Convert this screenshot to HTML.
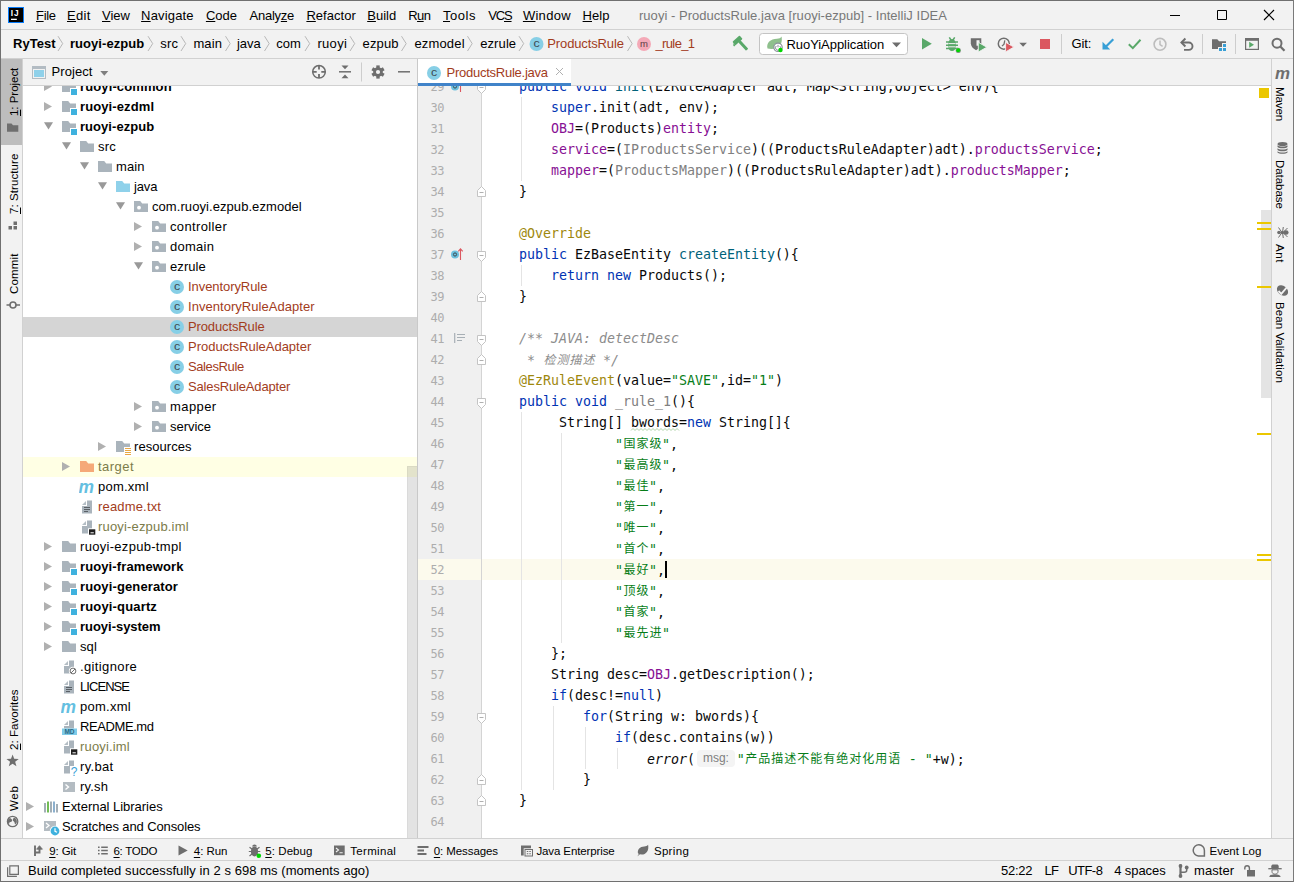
<!DOCTYPE html><html><head><meta charset="utf-8"><title>ruoyi - ProductsRule.java [ruoyi-ezpub] - IntelliJ IDEA</title><style>
*{box-sizing:border-box}
html,body{margin:0;padding:0}
body{width:1294px;height:882px;position:relative;overflow:hidden;background:#f2f2f2;
 font-family:"Liberation Sans","Noto Sans CJK SC",sans-serif;font-size:13px;color:#000;}
.abs{position:absolute}
.t{position:absolute;white-space:pre;line-height:20px;height:20px;font-size:13px}
u{text-decoration:underline;text-underline-offset:2px;text-decoration-thickness:1px}
.b{font-weight:bold}
.code{position:absolute;left:487px;white-space:pre;font-family:"DejaVu Sans Mono","Liberation Mono","Noto Sans CJK SC",monospace;font-size:13.29px;line-height:21px;height:21px;color:#080808}
.ln{position:absolute;left:418px;width:26.2px;text-align:right;font-family:"DejaVu Sans Mono","Liberation Mono",monospace;font-size:12px;letter-spacing:-0.4px;line-height:21px;height:21px;color:#adadad}
.k{color:#0033b3}.f{color:#871094}.g{color:#808080}.a{color:#9e880d}.s{color:#067d17}.c{color:#8c8c8c;font-style:italic}.m{color:#00627a}.i{font-style:italic}
.z{font-family:"Noto Sans CJK SC",sans-serif;font-size:12px;letter-spacing:1px;position:relative;top:-1px;left:0.5px}
.wv{text-decoration:underline wavy #b5b86a;text-decoration-thickness:1px;text-underline-offset:2px}
.hint{display:inline-block;font-family:"Liberation Sans",sans-serif;font-size:12px;color:#7f7f7f;background:#f4f4f4;border-radius:4px;height:17px;line-height:17px;width:38px;text-align:center;padding:0;margin:0 1.75px 0 2px;vertical-align:2px;letter-spacing:0}
.vt{position:absolute;white-space:pre;font-size:11.5px;line-height:14px;height:14px;transform-origin:0 0}
</style></head><body>
<div class="abs" style="left:0;top:0;width:1294px;height:30px;background:#f2f2f2;border-bottom:1px solid #d1d1d1"></div>
<svg class="abs" style="left:8px;top:7px" width="16" height="16" viewBox="0 0 16 16"><rect width="16" height="16" fill="#087cfa"/><rect x="1" y="1" width="14" height="14" fill="#000"/><text x="2.700" y="9.300" font-family="Liberation Sans,sans-serif" font-weight="bold" font-size="8.300" letter-spacing="0.900" fill="#fff">IJ</text><rect x="3" y="11.700" width="5.800" height="1.300" fill="#fff"/></svg>
<span class="t" style="letter-spacing:-0.32px;left:36px;top:6px;"><u style="text-underline-offset:1px">F</u>ile</span>
<span class="t" style="letter-spacing:0.30px;left:67px;top:6px;"><u style="text-underline-offset:1px">E</u>dit</span>
<span class="t" style="letter-spacing:0.00px;left:102px;top:6px;"><u style="text-underline-offset:1px">V</u>iew</span>
<span class="t" style="letter-spacing:0.16px;left:141.1px;top:6px;"><u style="text-underline-offset:1px">N</u>avigate</span>
<span class="t" style="letter-spacing:0.02px;left:205.9px;top:6px;"><u style="text-underline-offset:1px">C</u>ode</span>
<span class="t" style="letter-spacing:-0.26px;left:249.6px;top:6px;">Analy<u style="text-underline-offset:1px">z</u>e</span>
<span class="t" style="letter-spacing:0.03px;left:306.4px;top:6px;"><u style="text-underline-offset:1px">R</u>efactor</span>
<span class="t" style="letter-spacing:0.02px;left:367.2px;top:6px;"><u style="text-underline-offset:1px">B</u>uild</span>
<span class="t" style="letter-spacing:-0.63px;left:408.3px;top:6px;">R<u style="text-underline-offset:1px">u</u>n</span>
<span class="t" style="letter-spacing:0.52px;left:443px;top:6px;"><u style="text-underline-offset:1px">T</u>ools</span>
<span class="t" style="letter-spacing:-1.13px;left:488.2px;top:6px;">VC<u style="text-underline-offset:1px">S</u></span>
<span class="t" style="letter-spacing:0.28px;left:522.9px;top:6px;"><u style="text-underline-offset:1px">W</u>indow</span>
<span class="t" style="letter-spacing:0.03px;left:582.6px;top:6px;"><u style="text-underline-offset:1px">H</u>elp</span>
<span class="t" style="letter-spacing:0.03px;left:639px;top:6px;color:#787878">ruoyi - ProductsRule.java [ruoyi-ezpub] - IntelliJ IDEA</span>
<svg class="abs" style="left:1150px;top:0" width="144" height="30" viewBox="0 0 144 30"><path d="M20 15.500h10M67.500 10.500h9v9h-9z" stroke="#000" stroke-width="1" fill="none"/><path d="M114 10l10 10M124 10l-10 10" stroke="#000" stroke-width="1.200" fill="none"/></svg>
<div class="abs" style="left:0;top:30px;width:1294px;height:29px;background:#f2f2f2;border-bottom:1px solid #d1d1d1"></div>
<span class="t" style="letter-spacing:0.03px;left:13px;top:34px;font-weight:bold;">RyTest</span>
<span class="t" style="letter-spacing:0.05px;left:70px;top:34px;font-weight:bold;">ruoyi-ezpub</span>
<span class="t" style="letter-spacing:0.20px;left:160.2px;top:34px;">src</span>
<span class="t" style="letter-spacing:0.15px;left:193.4px;top:34px;">main</span>
<span class="t" style="letter-spacing:-0.08px;left:237px;top:34px;">java</span>
<span class="t" style="letter-spacing:0.07px;left:276.2px;top:34px;">com</span>
<span class="t" style="letter-spacing:0.32px;left:317.4px;top:34px;">ruoyi</span>
<span class="t" style="letter-spacing:0.14px;left:362.6px;top:34px;">ezpub</span>
<span class="t" style="letter-spacing:0.17px;left:414.4px;top:34px;">ezmodel</span>
<span class="t" style="letter-spacing:0.10px;left:480.2px;top:34px;">ezrule</span>
<span class="t" style="letter-spacing:-0.13px;left:547.3px;top:34px;color:#a23c1c;">ProductsRule</span>
<span class="t" style="letter-spacing:-0.61px;left:655.4px;top:34px;color:#a23c1c;">_rule_1</span>
<svg class="abs" style="left:0;top:30px" width="1294" height="29" viewBox="0 0 1294 29"><path d="M58 6.2l4.7 7.4l-4.7 7.4" stroke="#b8b8b8" stroke-width="1" fill="none"/><path d="M148 6.2l4.7 7.4l-4.7 7.4" stroke="#b8b8b8" stroke-width="1" fill="none"/><path d="M181 6.2l4.7 7.4l-4.7 7.4" stroke="#b8b8b8" stroke-width="1" fill="none"/><path d="M225.5 6.2l4.7 7.4l-4.7 7.4" stroke="#b8b8b8" stroke-width="1" fill="none"/><path d="M264.5 6.2l4.7 7.4l-4.7 7.4" stroke="#b8b8b8" stroke-width="1" fill="none"/><path d="M305 6.2l4.7 7.4l-4.7 7.4" stroke="#b8b8b8" stroke-width="1" fill="none"/><path d="M350 6.2l4.7 7.4l-4.7 7.4" stroke="#b8b8b8" stroke-width="1" fill="none"/><path d="M401.5 6.2l4.7 7.4l-4.7 7.4" stroke="#b8b8b8" stroke-width="1" fill="none"/><path d="M467.5 6.2l4.7 7.4l-4.7 7.4" stroke="#b8b8b8" stroke-width="1" fill="none"/><path d="M519 6.2l4.7 7.4l-4.7 7.4" stroke="#b8b8b8" stroke-width="1" fill="none"/><path d="M627.5 6.2l4.7 7.4l-4.7 7.4" stroke="#b8b8b8" stroke-width="1" fill="none"/><circle cx="536.5" cy="14" r="7" fill="#87cfe6"/><text x="536.5" y="17.2" text-anchor="middle" font-family="Liberation Sans,sans-serif" font-size="10" fill="#3c4a52" textLength="6.200" lengthAdjust="spacingAndGlyphs">c</text><circle cx="644" cy="14" r="7" fill="#f4a9b7"/><text x="644" y="17" text-anchor="middle" font-family="Liberation Sans,sans-serif" font-size="9.5" fill="#5c3a42">m</text></svg>
<svg class="abs" style="left:720px;top:30px" width="574" height="29" viewBox="720 30 574 29">
<!-- hammer -->
<g fill="#59a869" transform="rotate(-42 740 42)"><rect x="734.500" y="36.800" width="9.500" height="4.600" rx=".8"/><path d="M734.500 38.500l-1.800 1.500v1.400h1.800z"/><rect x="738.600" y="41" width="3" height="11.500" rx=".6"/></g>
<!-- run config box -->
<rect x="759.5" y="33.5" width="148" height="21" rx="3" ry="3" fill="#fff" stroke="#c4c4c4"/>
<!-- spring-boot icon -->
<path d="M767.5 48.5c-1.5-5.5 3-9.500 9.500-9.700 2.200-.1 3.600-.9 4.600-2.300.5 3.300.3 6.200-1.300 8.500-2.600 3.600-7.800 4.600-12.800 3.500z" fill="#8fc08d"/>
<circle cx="778" cy="47.300" r="4.200" fill="#fff" stroke="#8a9299" stroke-width="1.200"/>
<path d="M778 44.800v2.500M776.200 46a2.500 2.500 0 1 0 3.600 0" stroke="#8a9299" stroke-width="1" fill="none"/>
<circle cx="780.500" cy="50" r="2.200" fill="#00d600"/>
<path d="M892 42.500h9l-4.500 4.700z" fill="#6e6e6e"/>
<!-- run -->
<path d="M922 38l9.800 5.800-9.800 5.800z" fill="#59a869"/>
<!-- debug -->
<path d="M946 42h12M946 45.200h12M946 48.400h12M949.300 37.300l1.700 2.700M954.700 37.300l-1.700 2.700" stroke="#59a869" stroke-width="1.500" fill="none"/>
<path d="M948.200 44.500c0-3.500 1.600-5.500 3.800-5.500s3.800 2 3.800 5.500v1.500c0 3-1.600 5-3.800 5s-3.800-2-3.800-5z" fill="#59a869"/>
<path d="M948.500 43.600h7M948.500 46.800h7" stroke="#f2f2f2" stroke-width="1"/>
<circle cx="958.300" cy="50.400" r="2.600" fill="#8f9a92"/><circle cx="958.200" cy="50.200" r="2" fill="#00d600"/>
<!-- coverage -->
<path d="M970.800 38.300h10.500v5c0 3-2 5.300-5.250 7-3.250-1.700-5.250-4-5.250-7z" fill="#6e6e6e"/>
<path d="M976.500 40.200h3v5.500h-3z" fill="#f2f2f2"/>
<path d="M978.300 42.300l8.500 4.900-8.500 4.900z" fill="#59a869" stroke="#f2f2f2" stroke-width=".9"/>
<!-- profiler -->
<circle cx="1003.800" cy="43.700" r="5.500" fill="none" stroke="#6e6e6e" stroke-width="1.500"/>
<path d="M1004.800 40.300l-.8 3.800-2 2" stroke="#6e6e6e" stroke-width="1.300" fill="none"/>
<path d="M1005.600 42.300l8.300 4.800-8.300 4.800z" fill="#db5860" stroke="#f2f2f2" stroke-width=".9"/>
<path d="M1019.300 42.800h7.600l-3.800 4z" fill="#6e6e6e"/>
<!-- stop -->
<rect x="1040" y="39" width="10" height="10" fill="#db5860"/>
<path d="M1061.500 34v20M1202.500 34v20M1235.500 34v20" stroke="#cdcdcd" stroke-width="1"/>
<!-- git update -->
<path d="M1113.300 39.200l-8 8" stroke="#389fd6" stroke-width="2.200" fill="none"/><path d="M1102.500 41.800v7.700h7.700z" fill="#389fd6"/>
<!-- commit -->
<path d="M1128.800 44.300l4 3.800 7.700-8.300" stroke="#59a869" stroke-width="2" fill="none"/>
<!-- history -->
<circle cx="1160" cy="44.300" r="5.900" fill="none" stroke="#bdbdbd" stroke-width="1.600"/>
<path d="M1160 40.600v4l2.600 1.700" stroke="#bdbdbd" stroke-width="1.500" fill="none"/>
<!-- rollback -->
<path d="M1181.500 42.500h7.300a3.700 3.700 0 0 1 0 7.400h-4.800" stroke="#6e6e6e" stroke-width="1.900" fill="none"/>
<path d="M1185.400 38.500l-4 4 4 4" stroke="#6e6e6e" stroke-width="1.900" fill="none"/>
<!-- project structure -->
<path d="M1212 39.300h5.300l1.800 2h6.900v7.700h-14z" fill="#6e6e6e"/><path d="M1218 47h9v5h-9zM1222 43h5v5h-5z" fill="#f2f2f2"/><path d="M1219 48h3v3h-3zM1223 48h3v3h-3zM1223 44h3v3h-3z" fill="#389fd6"/>
<!-- run anything -->
<path d="M1245 38h14v12h-14z" fill="#6e6e6e"/><path d="M1246.200 40.800h11.600v8h-11.600z" fill="#f2f2f2"/>
<path d="M1249.200 41.700l4.800 3-4.800 3z" fill="#59a869"/>
<!-- search -->
<circle cx="1277" cy="43.200" r="4.500" fill="none" stroke="#6e6e6e" stroke-width="2"/>
<path d="M1280.300 46.500l4.200 4.200" stroke="#6e6e6e" stroke-width="2.300"/>
</svg>

<span class="t" style="letter-spacing:-0.06px;left:786.5px;top:35px;">RuoYiApplication</span>
<span class="t" style="letter-spacing:-0.12px;left:1071.5px;top:34px;">Git:</span>
<div class="abs" style="left:0;top:59px;width:23px;height:779px;background:#f2f2f2;border-right:1px solid #d1d1d1"></div>
<div class="abs" style="left:1px;top:59px;width:21px;height:86px;background:#bdbdbd"></div>
<span class="vt" style="letter-spacing:-0.03px;left:7px;top:116px;transform:rotate(-90deg)"><u>1</u>: Project</span>
<span class="vt" style="letter-spacing:0.08px;left:7px;top:213.8px;transform:rotate(-90deg)"><u>7</u>: Structure</span>
<span class="vt" style="letter-spacing:0.17px;left:7px;top:294px;transform:rotate(-90deg)">Commit</span>
<span class="vt" style="letter-spacing:0.04px;left:7px;top:749.8px;transform:rotate(-90deg)"><u>2</u>: Favorites</span>
<span class="vt" style="letter-spacing:0.67px;left:7px;top:811px;transform:rotate(-90deg)">Web</span>
<svg class="abs" style="left:0;top:59px" width="23" height="779" viewBox="0 59 23 779">
<path d="M7 123.500h4.500l1.500 1.700h5.300v6.600H7z" fill="#6e6e6e"/>
<path d="M8.500 226h3.500v3.500h-3.500zM13.500 226h3.500v3.500h-3.500zM13.500 221.500h3.500v3.500h-3.500z" fill="#6e6e6e"/>
<circle cx="13" cy="305" r="3" fill="none" stroke="#6e6e6e" stroke-width="1.600"/><path d="M6.500 305h3.500M16 305h4" stroke="#6e6e6e" stroke-width="1.600"/>
<polygon points="12.60,754.50 14.19,758.82 18.78,758.99 15.17,761.83 16.42,766.26 12.60,763.70 8.78,766.26 10.03,761.83 6.42,758.99 11.01,758.82" fill="#6e6e6e"/>
<circle cx="12.600" cy="821.500" r="5.200" fill="#f2f2f2" stroke="#6e6e6e" stroke-width="1.300"/><path d="M9 818.500c1.500-.5 2.500.2 3 1.300s-.2 2-1.400 2.200-1.800 1-1.400 2.400l-1.200-1.200c-.8-1.500-.5-3.300 1-4.700zM14.200 817.500l1.800 1.300c.9 1.200 1.100 2.600.7 4l-1.500 1.800c-.6-.8-.3-1.700-.9-2.600s-1.500-.9-1.500-2 .6-1.700 1.400-2.500z" fill="#6e6e6e"/>
</svg>
<div class="abs" style="left:23px;top:59px;width:394px;height:27px;background:#f2f2f2;border-bottom:1px solid #d1d1d1"></div>
<div class="abs" style="left:23px;top:86px;width:394px;height:752px;background:#fff"></div>
<span class="t" style="letter-spacing:0.07px;left:51.5px;top:62px;">Project</span>
<svg class="abs" style="left:23px;top:59px" width="394" height="27" viewBox="23 59 394 27">
<rect x="32.500" y="66.500" width="13" height="12" fill="#f2f2f2" stroke="#b3bcc3"/><rect x="32" y="66" width="14" height="3" fill="#b3bcc3"/><rect x="34" y="70" width="10" height="7" fill="#8fd1ea"/>
<path d="M100.300 71h8l-4 4.800z" fill="#7f7f7f"/>
<circle cx="319" cy="71.800" r="6.300" fill="none" stroke="#6e6e6e" stroke-width="1.500"/><path d="M319 65.500v4M319 74.100v4M312.700 71.800h4M321.300 71.800h4" stroke="#6e6e6e" stroke-width="1.800"/>
<path d="M339 71.800h12" stroke="#6e6e6e" stroke-width="1.500"/><path d="M341.500 65.500h7l-3.500 3.700zM341.500 78.200h7l-3.500-3.700z" fill="#6e6e6e"/>
<path d="M361.500 62.500v19" stroke="#cdcdcd"/>
<rect x="376.30" y="65.40" width="3.400" height="13.200" transform="rotate(0 378 72)" fill="#6e6e6e"/><rect x="376.30" y="65.40" width="3.400" height="13.200" transform="rotate(60 378 72)" fill="#6e6e6e"/><rect x="376.30" y="65.40" width="3.400" height="13.200" transform="rotate(120 378 72)" fill="#6e6e6e"/>
<circle cx="378" cy="72" r="4.800" fill="#6e6e6e"/><circle cx="378" cy="72" r="2.100" fill="#f2f2f2"/>
<path d="M398 71.800h12" stroke="#6e6e6e" stroke-width="1.500"/>
</svg>
<div class="abs" style="left:23px;top:86px;width:394px;height:752px;overflow:hidden"><div class="abs" style="left:-23px;top:-86px;width:420px;height:900px">
<span class="t" style="letter-spacing:0.12px;left:80px;top:77px;color:#000;font-weight:bold;">ruoyi-common</span>
<svg class="abs" style="left:61px;top:79px" width="18" height="18" viewBox="0 0 18 18"><path d="M1 2h6.2l2 2.5H15V13H1z" fill="#aab4bc"/><rect x="9" y="9" width="8" height="8" fill="#fff"/><rect x="10" y="10" width="6" height="6" fill="#3eb1de"/></svg>
<svg class="abs" style="left:44px;top:81px" width="12" height="12" viewBox="0 0 12 12"><path d="M0 1l8 4.5l-8 4.5z" fill="#b0b0b0"/></svg>
<span class="t" style="letter-spacing:0.11px;left:80px;top:97px;color:#000;font-weight:bold;">ruoyi-ezdml</span>
<svg class="abs" style="left:61px;top:99px" width="18" height="18" viewBox="0 0 18 18"><path d="M1 2h6.2l2 2.5H15V13H1z" fill="#aab4bc"/><rect x="9" y="9" width="8" height="8" fill="#fff"/><rect x="10" y="10" width="6" height="6" fill="#3eb1de"/></svg>
<svg class="abs" style="left:44px;top:101px" width="12" height="12" viewBox="0 0 12 12"><path d="M0 1l8 4.5l-8 4.5z" fill="#b0b0b0"/></svg>
<span class="t" style="letter-spacing:0.05px;left:80px;top:117px;color:#000;font-weight:bold;">ruoyi-ezpub</span>
<svg class="abs" style="left:61px;top:119px" width="18" height="18" viewBox="0 0 18 18"><path d="M1 2h6.2l2 2.5H15V13H1z" fill="#aab4bc"/><rect x="9" y="9" width="8" height="8" fill="#fff"/><rect x="10" y="10" width="6" height="6" fill="#3eb1de"/></svg>
<svg class="abs" style="left:44px;top:121px" width="12" height="12" viewBox="0 0 12 12"><path d="M0 1.2h9l-4.5 7.3z" fill="#999"/></svg>
<span class="t" style="letter-spacing:0.20px;left:98px;top:137px;color:#000;">src</span>
<svg class="abs" style="left:79px;top:139px" width="18" height="18" viewBox="0 0 18 18"><path d="M1 2h6.2l2 2.5H15V13H1z" fill="#aab4bc"/></svg>
<svg class="abs" style="left:62px;top:141px" width="12" height="12" viewBox="0 0 12 12"><path d="M0 1.2h9l-4.5 7.3z" fill="#999"/></svg>
<span class="t" style="letter-spacing:0.12px;left:116px;top:157px;color:#000;">main</span>
<svg class="abs" style="left:97px;top:159px" width="18" height="18" viewBox="0 0 18 18"><path d="M1 2h6.2l2 2.5H15V13H1z" fill="#aab4bc"/></svg>
<svg class="abs" style="left:80px;top:161px" width="12" height="12" viewBox="0 0 12 12"><path d="M0 1.2h9l-4.5 7.3z" fill="#999"/></svg>
<span class="t" style="letter-spacing:-0.15px;left:134px;top:177px;color:#000;">java</span>
<svg class="abs" style="left:115px;top:179px" width="18" height="18" viewBox="0 0 18 18"><path d="M1 2h6.2l2 2.5H15V13H1z" fill="#8fd1ea"/></svg>
<svg class="abs" style="left:98px;top:181px" width="12" height="12" viewBox="0 0 12 12"><path d="M0 1.2h9l-4.5 7.3z" fill="#999"/></svg>
<span class="t" style="letter-spacing:0.07px;left:152px;top:197px;color:#000;">com.ruoyi.ezpub.ezmodel</span>
<svg class="abs" style="left:133px;top:199px" width="18" height="18" viewBox="0 0 18 18"><path d="M1 2h6.2l2 2.5H15V13H1z" fill="#aab4bc"/><circle cx="6" cy="8.7" r="1.9" fill="#fff"/></svg>
<svg class="abs" style="left:116px;top:201px" width="12" height="12" viewBox="0 0 12 12"><path d="M0 1.2h9l-4.5 7.3z" fill="#999"/></svg>
<span class="t" style="letter-spacing:0.36px;left:170px;top:217px;color:#000;">controller</span>
<svg class="abs" style="left:151px;top:219px" width="18" height="18" viewBox="0 0 18 18"><path d="M1 2h6.2l2 2.5H15V13H1z" fill="#aab4bc"/><circle cx="6" cy="8.7" r="1.9" fill="#fff"/></svg>
<svg class="abs" style="left:134px;top:221px" width="12" height="12" viewBox="0 0 12 12"><path d="M0 1l8 4.5l-8 4.5z" fill="#b0b0b0"/></svg>
<span class="t" style="letter-spacing:0.27px;left:170px;top:237px;color:#000;">domain</span>
<svg class="abs" style="left:151px;top:239px" width="18" height="18" viewBox="0 0 18 18"><path d="M1 2h6.2l2 2.5H15V13H1z" fill="#aab4bc"/><circle cx="6" cy="8.7" r="1.9" fill="#fff"/></svg>
<svg class="abs" style="left:134px;top:241px" width="12" height="12" viewBox="0 0 12 12"><path d="M0 1l8 4.5l-8 4.5z" fill="#b0b0b0"/></svg>
<span class="t" style="letter-spacing:0.08px;left:170px;top:257px;color:#000;">ezrule</span>
<svg class="abs" style="left:151px;top:259px" width="18" height="18" viewBox="0 0 18 18"><path d="M1 2h6.2l2 2.5H15V13H1z" fill="#aab4bc"/><circle cx="6" cy="8.7" r="1.9" fill="#fff"/></svg>
<svg class="abs" style="left:134px;top:261px" width="12" height="12" viewBox="0 0 12 12"><path d="M0 1.2h9l-4.5 7.3z" fill="#999"/></svg>
<span class="t" style="letter-spacing:-0.07px;left:188px;top:277px;color:#a23c1c;">InventoryRule</span>
<svg class="abs" style="left:169px;top:279px" width="18" height="18" viewBox="0 0 18 18"><circle cx="8" cy="8" r="7" fill="#87cfe6"/><text x="8" y="11.2" text-anchor="middle" font-family="Liberation Sans,sans-serif" font-size="10" fill="#3c4a52" textLength="6.200" lengthAdjust="spacingAndGlyphs">c</text></svg>
<span class="t" style="letter-spacing:0.04px;left:188px;top:297px;color:#a23c1c;">InventoryRuleAdapter</span>
<svg class="abs" style="left:169px;top:299px" width="18" height="18" viewBox="0 0 18 18"><circle cx="8" cy="8" r="7" fill="#87cfe6"/><text x="8" y="11.2" text-anchor="middle" font-family="Liberation Sans,sans-serif" font-size="10" fill="#3c4a52" textLength="6.200" lengthAdjust="spacingAndGlyphs">c</text></svg>
<div class="abs" style="left:23px;width:394px;height:20px;top:317px;background:#d5d5d5;"></div>
<span class="t" style="letter-spacing:-0.12px;left:188px;top:317px;color:#a23c1c;">ProductsRule</span>
<svg class="abs" style="left:169px;top:319px" width="18" height="18" viewBox="0 0 18 18"><circle cx="8" cy="8" r="7" fill="#87cfe6"/><text x="8" y="11.2" text-anchor="middle" font-family="Liberation Sans,sans-serif" font-size="10" fill="#3c4a52" textLength="6.200" lengthAdjust="spacingAndGlyphs">c</text></svg>
<span class="t" style="letter-spacing:-0.02px;left:188px;top:337px;color:#a23c1c;">ProductsRuleAdapter</span>
<svg class="abs" style="left:169px;top:339px" width="18" height="18" viewBox="0 0 18 18"><circle cx="8" cy="8" r="7" fill="#87cfe6"/><text x="8" y="11.2" text-anchor="middle" font-family="Liberation Sans,sans-serif" font-size="10" fill="#3c4a52" textLength="6.200" lengthAdjust="spacingAndGlyphs">c</text></svg>
<span class="t" style="letter-spacing:-0.39px;left:188px;top:357px;color:#a23c1c;">SalesRule</span>
<svg class="abs" style="left:169px;top:359px" width="18" height="18" viewBox="0 0 18 18"><circle cx="8" cy="8" r="7" fill="#87cfe6"/><text x="8" y="11.2" text-anchor="middle" font-family="Liberation Sans,sans-serif" font-size="10" fill="#3c4a52" textLength="6.200" lengthAdjust="spacingAndGlyphs">c</text></svg>
<span class="t" style="letter-spacing:-0.16px;left:188px;top:377px;color:#a23c1c;">SalesRuleAdapter</span>
<svg class="abs" style="left:169px;top:379px" width="18" height="18" viewBox="0 0 18 18"><circle cx="8" cy="8" r="7" fill="#87cfe6"/><text x="8" y="11.2" text-anchor="middle" font-family="Liberation Sans,sans-serif" font-size="10" fill="#3c4a52" textLength="6.200" lengthAdjust="spacingAndGlyphs">c</text></svg>
<span class="t" style="letter-spacing:0.42px;left:170px;top:397px;color:#000;">mapper</span>
<svg class="abs" style="left:151px;top:399px" width="18" height="18" viewBox="0 0 18 18"><path d="M1 2h6.2l2 2.5H15V13H1z" fill="#aab4bc"/><circle cx="6" cy="8.7" r="1.9" fill="#fff"/></svg>
<svg class="abs" style="left:134px;top:401px" width="12" height="12" viewBox="0 0 12 12"><path d="M0 1l8 4.5l-8 4.5z" fill="#b0b0b0"/></svg>
<span class="t" style="letter-spacing:-0.04px;left:170px;top:417px;color:#000;">service</span>
<svg class="abs" style="left:151px;top:419px" width="18" height="18" viewBox="0 0 18 18"><path d="M1 2h6.2l2 2.5H15V13H1z" fill="#aab4bc"/><circle cx="6" cy="8.7" r="1.9" fill="#fff"/></svg>
<svg class="abs" style="left:134px;top:421px" width="12" height="12" viewBox="0 0 12 12"><path d="M0 1l8 4.5l-8 4.5z" fill="#b0b0b0"/></svg>
<span class="t" style="letter-spacing:0.06px;left:134px;top:437px;color:#000;">resources</span>
<svg class="abs" style="left:115px;top:439px" width="18" height="18" viewBox="0 0 18 18"><path d="M1 2h6.2l2 2.5H15V13H1z" fill="#aab4bc"/><rect x="9" y="8" width="8" height="10" fill="#fff"/><path d="M10 9.500h6M10 11.500h6M10 13.500h6M10 15.500h6" stroke="#e9a843" stroke-width="1"/></svg>
<svg class="abs" style="left:98px;top:441px" width="12" height="12" viewBox="0 0 12 12"><path d="M0 1l8 4.5l-8 4.5z" fill="#b0b0b0"/></svg>
<div class="abs" style="left:23px;width:394px;height:20px;top:457px;background:#ffffe4;"></div>
<span class="t" style="letter-spacing:0.47px;left:98px;top:457px;color:#7c7c4a;">target</span>
<svg class="abs" style="left:79px;top:459px" width="18" height="18" viewBox="0 0 18 18"><path d="M1 2h6.2l2 2.5H15V13H1z" fill="#f5a978"/></svg>
<svg class="abs" style="left:62px;top:461px" width="12" height="12" viewBox="0 0 12 12"><path d="M0 1l8 4.5l-8 4.5z" fill="#b0b0b0"/></svg>
<span class="t" style="letter-spacing:0.24px;left:98px;top:477px;color:#000;">pom.xml</span>
<svg class="abs" style="left:79px;top:479px" width="18" height="18" viewBox="0 0 18 18"><text x="-0.5" y="13.6" font-family="Liberation Sans,sans-serif" font-style="italic" font-weight="bold" font-size="19" fill="#64bfe1" textLength="15.500" lengthAdjust="spacingAndGlyphs">m</text></svg>
<span class="t" style="letter-spacing:0.17px;left:98px;top:497px;color:#a23c1c;">readme.txt</span>
<svg class="abs" style="left:79px;top:499px" width="18" height="18" viewBox="0 0 18 18"><path d="M8 1.500H13v13H3V7h5z" fill="#aab4bc"/><path d="M3 6l4-4v4z" fill="#b4bdc4"/><path d="M5 8.5h6M5 10.5h6M5 12.5h4" stroke="#5a6066" stroke-width="1"/></svg>
<span class="t" style="letter-spacing:0.17px;left:98px;top:517px;color:#7c7c4a;">ruoyi-ezpub.iml</span>
<svg class="abs" style="left:79px;top:519px" width="18" height="18" viewBox="0 0 18 18"><path d="M8 1.500H13v13H3V7h5z" fill="#aab4bc"/><path d="M3 6l4-4v4z" fill="#b4bdc4"/><rect x="9" y="9.300" width="8" height="7.400" fill="#fff"/><rect x="10" y="10.300" width="6.300" height="5.400" fill="#1e1e1e"/><rect x="11.500" y="13.300" width="3.300" height="1" fill="#fff"/></svg>
<span class="t" style="letter-spacing:0.30px;left:80px;top:537px;color:#000;">ruoyi-ezpub-tmpl</span>
<svg class="abs" style="left:61px;top:539px" width="18" height="18" viewBox="0 0 18 18"><path d="M1 2h6.2l2 2.5H15V13H1z" fill="#aab4bc"/></svg>
<svg class="abs" style="left:44px;top:541px" width="12" height="12" viewBox="0 0 12 12"><path d="M0 1l8 4.5l-8 4.5z" fill="#b0b0b0"/></svg>
<span class="t" style="letter-spacing:0.11px;left:80px;top:557px;color:#000;font-weight:bold;">ruoyi-framework</span>
<svg class="abs" style="left:61px;top:559px" width="18" height="18" viewBox="0 0 18 18"><path d="M1 2h6.2l2 2.5H15V13H1z" fill="#aab4bc"/><rect x="9" y="9" width="8" height="8" fill="#fff"/><rect x="10" y="10" width="6" height="6" fill="#3eb1de"/></svg>
<svg class="abs" style="left:44px;top:561px" width="12" height="12" viewBox="0 0 12 12"><path d="M0 1l8 4.5l-8 4.5z" fill="#b0b0b0"/></svg>
<span class="t" style="letter-spacing:0.13px;left:80px;top:577px;color:#000;font-weight:bold;">ruoyi-generator</span>
<svg class="abs" style="left:61px;top:579px" width="18" height="18" viewBox="0 0 18 18"><path d="M1 2h6.2l2 2.5H15V13H1z" fill="#aab4bc"/><rect x="9" y="9" width="8" height="8" fill="#fff"/><rect x="10" y="10" width="6" height="6" fill="#3eb1de"/></svg>
<svg class="abs" style="left:44px;top:581px" width="12" height="12" viewBox="0 0 12 12"><path d="M0 1l8 4.5l-8 4.5z" fill="#b0b0b0"/></svg>
<span class="t" style="letter-spacing:0.16px;left:80px;top:597px;color:#000;font-weight:bold;">ruoyi-quartz</span>
<svg class="abs" style="left:61px;top:599px" width="18" height="18" viewBox="0 0 18 18"><path d="M1 2h6.2l2 2.5H15V13H1z" fill="#aab4bc"/><rect x="9" y="9" width="8" height="8" fill="#fff"/><rect x="10" y="10" width="6" height="6" fill="#3eb1de"/></svg>
<svg class="abs" style="left:44px;top:601px" width="12" height="12" viewBox="0 0 12 12"><path d="M0 1l8 4.5l-8 4.5z" fill="#b0b0b0"/></svg>
<span class="t" style="letter-spacing:-0.03px;left:80px;top:617px;color:#000;font-weight:bold;">ruoyi-system</span>
<svg class="abs" style="left:61px;top:619px" width="18" height="18" viewBox="0 0 18 18"><path d="M1 2h6.2l2 2.5H15V13H1z" fill="#aab4bc"/><rect x="9" y="9" width="8" height="8" fill="#fff"/><rect x="10" y="10" width="6" height="6" fill="#3eb1de"/></svg>
<svg class="abs" style="left:44px;top:621px" width="12" height="12" viewBox="0 0 12 12"><path d="M0 1l8 4.5l-8 4.5z" fill="#b0b0b0"/></svg>
<span class="t" style="letter-spacing:0.10px;left:80px;top:637px;color:#000;">sql</span>
<svg class="abs" style="left:61px;top:639px" width="18" height="18" viewBox="0 0 18 18"><path d="M1 2h6.2l2 2.5H15V13H1z" fill="#aab4bc"/></svg>
<svg class="abs" style="left:44px;top:641px" width="12" height="12" viewBox="0 0 12 12"><path d="M0 1l8 4.5l-8 4.5z" fill="#b0b0b0"/></svg>
<span class="t" style="letter-spacing:0.37px;left:80px;top:657px;color:#000;">.gitignore</span>
<svg class="abs" style="left:61px;top:659px" width="18" height="18" viewBox="0 0 18 18"><path d="M8 1.500H13v13H3V7h5z" fill="#aab4bc"/><path d="M3 6l4-4v4z" fill="#b4bdc4"/><circle cx="12" cy="12" r="4.2" fill="#fff"/><circle cx="12" cy="12" r="2.9" fill="none" stroke="#6e6e6e" stroke-width="1"/><path d="M10 14l4-4" stroke="#6e6e6e" stroke-width="1"/></svg>
<span class="t" style="letter-spacing:-0.94px;left:80px;top:677px;color:#000;">LICENSE</span>
<svg class="abs" style="left:61px;top:679px" width="18" height="18" viewBox="0 0 18 18"><path d="M8 1.500H13v13H3V7h5z" fill="#aab4bc"/><path d="M3 6l4-4v4z" fill="#b4bdc4"/><path d="M5 8.5h6M5 10.5h6M5 12.5h4" stroke="#5a6066" stroke-width="1"/></svg>
<span class="t" style="letter-spacing:0.26px;left:80px;top:697px;color:#000;">pom.xml</span>
<svg class="abs" style="left:61px;top:699px" width="18" height="18" viewBox="0 0 18 18"><text x="-0.5" y="13.6" font-family="Liberation Sans,sans-serif" font-style="italic" font-weight="bold" font-size="19" fill="#64bfe1" textLength="15.500" lengthAdjust="spacingAndGlyphs">m</text></svg>
<span class="t" style="letter-spacing:-0.41px;left:80px;top:717px;color:#000;">README.md</span>
<svg class="abs" style="left:61px;top:719px" width="18" height="18" viewBox="0 0 18 18"><path d="M8 1.500H13v8H3V7h5z" fill="#aab4bc"/><path d="M3 6l4-4v4z" fill="#b4bdc4"/><rect x="1" y="9.500" width="15" height="6.500" fill="#7fcbe8"/><text x="8.500" y="15.200" text-anchor="middle" font-family="Liberation Sans,sans-serif" font-weight="bold" font-size="6.500" fill="#2a6a86">MD</text></svg>
<span class="t" style="letter-spacing:0.16px;left:80px;top:737px;color:#7c7c4a;">ruoyi.iml</span>
<svg class="abs" style="left:61px;top:739px" width="18" height="18" viewBox="0 0 18 18"><path d="M8 1.500H13v13H3V7h5z" fill="#aab4bc"/><path d="M3 6l4-4v4z" fill="#b4bdc4"/><rect x="9" y="9.300" width="8" height="7.400" fill="#fff"/><rect x="10" y="10.300" width="6.300" height="5.400" fill="#1e1e1e"/><rect x="11.500" y="13.300" width="3.300" height="1" fill="#fff"/></svg>
<span class="t" style="letter-spacing:0.32px;left:80px;top:757px;color:#000;">ry.bat</span>
<svg class="abs" style="left:61px;top:759px" width="18" height="18" viewBox="0 0 18 18"><path d="M8 1.500H13v13H3V7h5z" fill="#aab4bc"/><path d="M3 6l4-4v4z" fill="#b4bdc4"/><rect x="9" y="7" width="8" height="10" fill="#fff"/><text x="13" y="17" text-anchor="middle" font-family="Liberation Sans,sans-serif" font-size="12" fill="#3b9fd8">?</text></svg>
<span class="t" style="letter-spacing:0.18px;left:80px;top:777px;color:#000;">ry.sh</span>
<svg class="abs" style="left:61px;top:779px" width="18" height="18" viewBox="0 0 18 18"><rect x="2" y="3" width="12" height="10" fill="#b4bcc2"/><path d="M4.5 5.5l3 2.5l-3 2.5" stroke="#fff" stroke-width="1.4" fill="none"/></svg>
<span class="t" style="letter-spacing:-0.03px;left:62px;top:797px;color:#000;">External Libraries</span>
<svg class="abs" style="left:43px;top:799px" width="18" height="18" viewBox="0 0 18 18"><path d="M2 4v9.500M8 2.500v11M14 5v8.500" stroke="#9aa7b0" stroke-width="1.800"/><path d="M11 2.500v11" stroke="#7fa8c9" stroke-width="1.800"/><path d="M5 2.500v11" stroke="#62b543" stroke-width="1.800"/></svg>
<svg class="abs" style="left:26px;top:801px" width="12" height="12" viewBox="0 0 12 12"><path d="M0 1l8 4.5l-8 4.5z" fill="#b0b0b0"/></svg>
<span class="t" style="letter-spacing:-0.11px;left:62px;top:817px;color:#000;">Scratches and Consoles</span>
<svg class="abs" style="left:43px;top:819px" width="18" height="18" viewBox="0 0 18 18"><rect x="1" y="2" width="12" height="10" fill="#b4bcc2"/><path d="M3 4l3 2.5l-3 2.5" stroke="#fff" stroke-width="1.3" fill="none"/><circle cx="12" cy="12" r="5.2" fill="#fff"/><circle cx="12" cy="12" r="4.4" fill="#3eb1de"/><path d="M12 9.3v3l2 1" stroke="#fff" stroke-width="1.2" fill="none"/></svg>
<svg class="abs" style="left:26px;top:821px" width="12" height="12" viewBox="0 0 12 12"><path d="M0 1l8 4.5l-8 4.5z" fill="#b0b0b0"/></svg>
</div></div>
<div class="abs" style="left:407px;top:466px;width:10px;height:372px;background:rgba(0,0,0,0.11);box-shadow:inset 1px 1px 0 rgba(0,0,0,0.04)"></div>
<div class="abs" style="left:417px;top:59px;width:1px;height:779px;background:#c9c9c9"></div>
<div class="abs" style="left:418px;top:59px;width:853px;height:27px;background:#f2f2f2;border-bottom:1px solid #d1d1d1"></div>
<div class="abs" style="left:418px;top:59px;width:153px;height:27px;background:#fff"></div>
<div class="abs" style="left:418px;top:83px;width:153px;height:3px;background:#4083c9"></div>
<svg class="abs" style="left:426px;top:65px" width="18" height="18" viewBox="0 0 18 18"><circle cx="8" cy="8" r="7" fill="#87cfe6"/><text x="8" y="11.2" text-anchor="middle" font-family="Liberation Sans,sans-serif" font-size="10" fill="#3c4a52" textLength="6.200" lengthAdjust="spacingAndGlyphs">c</text></svg>
<span class="t" style="letter-spacing:-0.25px;left:446.5px;top:63px;color:#a23c1c">ProductsRule.java</span>
<svg class="abs" style="left:555px;top:67px" width="9" height="9" viewBox="0 0 9 9"><path d="M1 1l7 7M8 1l-7 7" stroke="#b0b0b0" stroke-width="1"/></svg>
<div class="abs" style="left:418px;top:86px;width:853px;height:752px;background:#fff"></div>
<div class="abs" style="left:418px;top:86px;width:64px;height:752px;background:#f0f0f0;border-right:1px solid #d4d4d4"></div>
<div class="abs" style="left:418px;top:559px;width:853px;height:21px;background:#fcfaed"></div>
<div class="abs" style="left:481px;top:559px;width:1px;height:21px;background:#d4d4d4"></div>
<div class="abs" style="left:418px;top:86px;width:853px;height:752px;overflow:hidden"><div class="abs" style="left:-418px;top:-86px;width:1300px;height:900px">
<div class="abs" style="left:521px;top:97px;width:1px;height:84px;background:#e4e4e4"></div>
<div class="abs" style="left:521px;top:265px;width:1px;height:21px;background:#e4e4e4"></div>
<div class="abs" style="left:521px;top:412px;width:1px;height:378px;background:#e4e4e4"></div>
<div class="abs" style="left:561px;top:433px;width:1px;height:210px;background:#e4e4e4"></div>
<div class="abs" style="left:553px;top:706px;width:1px;height:84px;background:#e4e4e4"></div>
<div class="abs" style="left:585px;top:727px;width:1px;height:42px;background:#e4e4e4"></div>
<div class="abs" style="left:617px;top:748px;width:1px;height:21px;background:#e4e4e4"></div>
<div class="ln" style="top:77px">29</div>
<div class="code" style="top:76px">    <span class="k">public</span> <span class="k">void</span> <span class="m">init</span>(EzRuleAdapter adt, Map&lt;String,Object&gt; env){</div>
<div class="ln" style="top:98px">30</div>
<div class="code" style="top:97px">        <span class="k">super</span>.init(adt, env);</div>
<div class="ln" style="top:119px">31</div>
<div class="code" style="top:118px">        <span class="f">OBJ</span>=(Products)<span class="f">entity</span>;</div>
<div class="ln" style="top:140px">32</div>
<div class="code" style="top:139px">        <span class="f">service</span>=(<span class="g">IProductsService</span>)((ProductsRuleAdapter)adt).<span class="f">productsService</span>;</div>
<div class="ln" style="top:161px">33</div>
<div class="code" style="top:160px">        <span class="f">mapper</span>=(<span class="g">ProductsMapper</span>)((ProductsRuleAdapter)adt).<span class="f">productsMapper</span>;</div>
<div class="ln" style="top:182px">34</div>
<div class="code" style="top:181px">    }</div>
<div class="ln" style="top:203px">35</div>
<div class="code" style="top:202px"></div>
<div class="ln" style="top:224px">36</div>
<div class="code" style="top:223px">    <span class="a">@Override</span></div>
<div class="ln" style="top:245px">37</div>
<div class="code" style="top:244px">    <span class="k">public</span> EzBaseEntity <span class="m">createEntity</span>(){</div>
<div class="ln" style="top:266px">38</div>
<div class="code" style="top:265px">        <span class="k">return</span> <span class="k">new</span> Products();</div>
<div class="ln" style="top:287px">39</div>
<div class="code" style="top:286px">    }</div>
<div class="ln" style="top:308px">40</div>
<div class="code" style="top:307px"></div>
<div class="ln" style="top:329px">41</div>
<div class="code" style="top:328px">    <span class="c">/** JAVA: detectDesc</span></div>
<div class="ln" style="top:350px">42</div>
<div class="code" style="top:349px">    <span class="c"> * <span class="z">检测描述</span> */</span></div>
<div class="ln" style="top:371px">43</div>
<div class="code" style="top:370px">    <span class="a">@EzRuleEvent</span>(value=<span class="s">&quot;SAVE&quot;</span>,id=<span class="s">&quot;1&quot;</span>)</div>
<div class="ln" style="top:392px">44</div>
<div class="code" style="top:391px">    <span class="k">public</span> <span class="k">void</span> <span class="g">_rule_1</span>(){</div>
<div class="ln" style="top:413px">45</div>
<div class="code" style="top:412px">         String[] bwords=<span class="k">new</span> String[]{</div>
<div class="ln" style="top:434px">46</div>
<div class="code" style="top:433px">                <span class="s">&quot;<span class="z">国家级</span>&quot;</span>,</div>
<div class="ln" style="top:455px">47</div>
<div class="code" style="top:454px">                <span class="s">&quot;<span class="z">最高级</span>&quot;</span>,</div>
<div class="ln" style="top:476px">48</div>
<div class="code" style="top:475px">                <span class="s">&quot;<span class="z">最佳</span>&quot;</span>,</div>
<div class="ln" style="top:497px">49</div>
<div class="code" style="top:496px">                <span class="s">&quot;<span class="z">第一</span>&quot;</span>,</div>
<div class="ln" style="top:518px">50</div>
<div class="code" style="top:517px">                <span class="s">&quot;<span class="z">唯一</span>&quot;</span>,</div>
<div class="ln" style="top:539px">51</div>
<div class="code" style="top:538px">                <span class="s">&quot;<span class="z">首个</span>&quot;</span>,</div>
<div class="ln" style="top:560px">52</div>
<div class="code" style="top:559px">                <span class="s">&quot;<span class="z">最好</span>&quot;</span>,</div>
<div class="ln" style="top:581px">53</div>
<div class="code" style="top:580px">                <span class="s">&quot;<span class="z">顶级</span>&quot;</span>,</div>
<div class="ln" style="top:602px">54</div>
<div class="code" style="top:601px">                <span class="s">&quot;<span class="z">首家</span>&quot;</span>,</div>
<div class="ln" style="top:623px">55</div>
<div class="code" style="top:622px">                <span class="s">&quot;<span class="z">最先进</span>&quot;</span></div>
<div class="ln" style="top:644px">56</div>
<div class="code" style="top:643px">        };</div>
<div class="ln" style="top:665px">57</div>
<div class="code" style="top:664px">        String desc=<span class="f">OBJ</span>.getDescription();</div>
<div class="ln" style="top:686px">58</div>
<div class="code" style="top:685px">        <span class="k">if</span>(desc!=<span class="k">null</span>)</div>
<div class="ln" style="top:707px">59</div>
<div class="code" style="top:706px">            <span class="k">for</span>(String w: bwords){</div>
<div class="ln" style="top:728px">60</div>
<div class="code" style="top:727px">                <span class="k">if</span>(desc.contains(w))</div>
<div class="ln" style="top:749px">61</div>
<div class="code" style="top:748px">                    <span class="i">error</span>(<span class="hint">msg:</span><span class="s">&quot;<span class="z">产品描述不能有绝对化用语</span> - &quot;</span>+w);</div>
<div class="ln" style="top:770px">62</div>
<div class="code" style="top:769px">            }</div>
<div class="ln" style="top:791px">63</div>
<div class="code" style="top:790px">    }</div>
<div class="ln" style="top:812px">64</div>
<div class="code" style="top:811px"></div>
<svg class="abs" style="left:418px;top:60px" width="100" height="800" viewBox="418 60 100 800">
<path d="M477.5 83.5h8v6l-4 4l-4-4z" fill="#fff" stroke="#c4c4c4"/><path d="M479.5 87.5h4" stroke="#b0b0b0"/>
<path d="M477.5 251.5h8v6l-4 4l-4-4z" fill="#fff" stroke="#c4c4c4"/><path d="M479.5 255.5h4" stroke="#b0b0b0"/>
<path d="M477.5 335.5h8v6l-4 4l-4-4z" fill="#fff" stroke="#c4c4c4"/><path d="M479.5 339.5h4" stroke="#b0b0b0"/>
<path d="M477.5 398.5h8v6l-4 4l-4-4z" fill="#fff" stroke="#c4c4c4"/><path d="M479.5 402.5h4" stroke="#b0b0b0"/>
<path d="M477.5 713.5h8v6l-4 4l-4-4z" fill="#fff" stroke="#c4c4c4"/><path d="M479.5 717.5h4" stroke="#b0b0b0"/>
<path d="M477.5 196.5h8v-6l-4-4l-4 4z" fill="#fff" stroke="#c4c4c4"/><path d="M479.5 192.5h4" stroke="#b0b0b0"/>
<path d="M477.5 301.5h8v-6l-4-4l-4 4z" fill="#fff" stroke="#c4c4c4"/><path d="M479.5 297.5h4" stroke="#b0b0b0"/>
<path d="M477.5 364.5h8v-6l-4-4l-4 4z" fill="#fff" stroke="#c4c4c4"/><path d="M479.5 360.5h4" stroke="#b0b0b0"/>
<path d="M477.5 784.5h8v-6l-4-4l-4 4z" fill="#fff" stroke="#c4c4c4"/><path d="M479.5 780.5h4" stroke="#b0b0b0"/>
<path d="M477.5 805.5h8v-6l-4-4l-4 4z" fill="#fff" stroke="#c4c4c4"/><path d="M479.5 801.5h4" stroke="#b0b0b0"/>
<circle cx="455" cy="86.5" r="4" fill="#6cc0de"/><circle cx="455" cy="86.5" r="1.600" fill="none" stroke="#3c4a52" stroke-width="1"/><path d="M460.500 92.0v-10.500M458.300 83.3l2.200-2.500l2.200 2.500" stroke="#db5860" stroke-width="1.100" fill="none"/>
<circle cx="455" cy="254.5" r="4" fill="#6cc0de"/><circle cx="455" cy="254.5" r="1.600" fill="none" stroke="#3c4a52" stroke-width="1"/><path d="M460.500 260.0v-10.500M458.300 251.3l2.200-2.500l2.200 2.500" stroke="#db5860" stroke-width="1.100" fill="none"/>
<path d="M454.700 333v10" stroke="#a7afb5" stroke-width="1.200"/><path d="M457 334.5h8M457 337.5h8M457 340.5h5" stroke="#a7afb5" stroke-width="1.200"/>
</svg>
<svg class="abs" style="left:630px;top:426px" width="52" height="6" viewBox="630 426 52 6"><polyline points="631,430.5 633,428.5 635,430.5 637,428.5 639,430.5 641,428.5 643,430.5 645,428.5 647,430.5 649,428.5 651,430.5 653,428.5 655,430.5 657,428.5 659,430.5 661,428.5 663,430.5 665,428.5 667,430.5 669,428.5 671,430.5 673,428.5 675,430.5 677,428.5 679,430.5" fill="none" stroke="#b2d4aa" stroke-width="1"/></svg>
<div class="abs" style="left:665px;top:561px;width:2px;height:17px;background:#000"></div>
</div></div>
<div class="abs" style="left:1261px;top:210px;width:10px;height:188px;background:#e4e4e4"></div>
<div class="abs" style="left:1259px;top:88px;width:10px;height:10px;background:#ebc700"></div>
<div class="abs" style="left:1257px;top:222px;width:14px;height:2px;background:#ebc700"></div>
<div class="abs" style="left:1257px;top:228px;width:14px;height:2px;background:#ebc700"></div>
<div class="abs" style="left:1257px;top:286px;width:14px;height:2px;background:#ebc700"></div>
<div class="abs" style="left:1257px;top:433px;width:14px;height:2px;background:#ebc700"></div>
<div class="abs" style="left:1257px;top:554px;width:14px;height:2px;background:#ebc700"></div>
<div class="abs" style="left:1257px;top:559px;width:14px;height:2px;background:#ebc700"></div>
<div class="abs" style="left:1271px;top:59px;width:23px;height:779px;background:#f2f2f2;border-left:1px solid #d1d1d1"></div>
<span class="vt" style="letter-spacing:-0.08px;left:1287px;top:86.9px;transform:rotate(90deg)">Maven</span>
<span class="vt" style="letter-spacing:-0.05px;left:1287px;top:160px;transform:rotate(90deg)">Database</span>
<span class="vt" style="letter-spacing:0.57px;left:1287px;top:243.8px;transform:rotate(90deg)">Ant</span>
<span class="vt" style="letter-spacing:0.08px;left:1287px;top:301.6px;transform:rotate(90deg)">Bean Validation</span>
<svg class="abs" style="left:1272px;top:59px" width="22" height="400" viewBox="1272 59 22 400">
<text x="1275" y="79.300" font-family="Liberation Sans,sans-serif" font-style="italic" font-weight="bold" font-size="17" fill="#6e6e6e" textLength="15" lengthAdjust="spacingAndGlyphs">m</text>
<g fill="#6e6e6e"><ellipse cx="1282.500" cy="144" rx="5" ry="2"/><path d="M1277.500 145.200c1 1.700 9 1.700 10 0v1.800c-1 1.700-9 1.700-10 0zM1277.500 148.200c1 1.700 9 1.700 10 0v1.800c-1 1.700-9 1.700-10 0zM1277.500 151.200c1 1.700 9 1.700 10 0v1.300c-1 1.700-9 1.700-10 0z"/></g>
<g transform="rotate(-90 1282.500 232.500)"><g fill="#6e6e6e"><ellipse cx="1282.500" cy="229" rx="1.800" ry="1.800"/><ellipse cx="1282.500" cy="232.300" rx="1.500" ry="1.800"/><ellipse cx="1282.500" cy="236" rx="2.200" ry="2.600"/></g><path d="M1282.500 232l-5-3.500M1282.500 232l5-3.500M1282.500 232.500l-5.500.8M1282.500 232.500l5.500.8M1282.500 233l-4.500 4.500M1282.500 233l4.500 4.500" stroke="#6e6e6e" stroke-width="1" fill="none"/></g>
<g transform="rotate(40 1282.500 290.500)"><ellipse cx="1282.500" cy="290.500" rx="6.200" ry="4.600" fill="#6e6e6e"/></g><path d="M1278.500 291l2.800 2.800 5.500-6.500" stroke="#f2f2f2" stroke-width="1.800" fill="none"/>
</svg>
<div class="abs" style="left:0;top:838px;width:1294px;height:23px;background:#f2f2f2;border-top:1px solid #d1d1d1;border-bottom:1px solid #d1d1d1"></div>
<span class="t" style="letter-spacing:-0.10px;left:49.2px;top:841px;font-size:11.5px;"><u>9</u>: Git</span>
<span class="t" style="letter-spacing:-0.29px;left:113.5px;top:841px;font-size:11.5px;"><u>6</u>: TODO</span>
<span class="t" style="letter-spacing:-0.05px;left:193.8px;top:841px;font-size:11.5px;"><u>4</u>: Run</span>
<span class="t" style="letter-spacing:0.06px;left:265.3px;top:841px;font-size:11.5px;"><u>5</u>: Debug</span>
<span class="t" style="letter-spacing:0.31px;left:350.3px;top:841px;font-size:11.5px;">Terminal</span>
<span class="t" style="letter-spacing:-0.09px;left:433.8px;top:841px;font-size:11.5px;"><u>0</u>: Messages</span>
<span class="t" style="letter-spacing:-0.11px;left:536.4px;top:841px;font-size:11.5px;">Java Enterprise</span>
<span class="t" style="letter-spacing:0.33px;left:653.9px;top:841px;font-size:11.5px;">Spring</span>
<span class="t" style="letter-spacing:0.01px;left:1209.5px;top:841px;font-size:11.5px;">Event Log</span>
<svg class="abs" style="left:0;top:839px" width="1294" height="21" viewBox="0 839 1294 21">
<path d="M35 845.500v10.500M35 852.500h4.500v-5" stroke="#6e6e6e" stroke-width="1.900" fill="none"/><path d="M36.600 849.200l2.900-3.500 2.900 3.500z" fill="#6e6e6e" stroke="#6e6e6e" stroke-width=".8"/>
<path d="M98 847.200h1.600M98 850.500h1.600M98 853.800h1.600M101.200 847.200h6.600M101.200 850.500h6.600M101.200 853.800h6.600" stroke="#6e6e6e" stroke-width="1.400"/>
<path d="M178.500 845.500l9.200 5-9.200 5z" fill="#6e6e6e"/>
<g fill="#6e6e6e"><ellipse cx="254.500" cy="851.500" rx="3.600" ry="5"/><path d="M252 846.400a2.600 2.600 0 0 1 5 0z"/></g><path d="M248.800 851.500h11.500M249.500 847.200l2.800 2M259.500 847.200l-2.800 2M249.500 856l2.800-2.200M259.500 856l-2.800-2.200" stroke="#6e6e6e" stroke-width="1.200"/><circle cx="258.800" cy="855.800" r="2.300" fill="#00d600"/>
<rect x="334" y="845.500" width="10.700" height="9.700" fill="#6e6e6e"/><path d="M336 848l2.500 2-2.500 2M339.500 852.800h3.200" stroke="#f2f2f2" stroke-width="1.100" fill="none"/>
<path d="M417.500 847h11M417.500 850.500h6.500M417.500 854h9" stroke="#6e6e6e" stroke-width="1.800"/>
<path d="M521 845.500h10v2.700h-7.300v7.300H521z" fill="#6e6e6e"/><rect x="525" y="849.500" width="7.500" height="6.500" fill="none" stroke="#6e6e6e" stroke-width="1"/><path d="M526.800 851.500h1.500M529.300 851.500h1.500M526.800 853.800h1.500M529.300 853.800h1.500" stroke="#6e6e6e" stroke-width="1.100"/>
<path d="M638 853.500c-.8-4.200 2-6.800 6.200-7 1.800-.1 3-.7 3.900-1.700.5 2.800.2 5.300-1.200 7.200-2 2.700-5.600 3.400-8.900 1.500z" fill="#6e6e6e"/><path d="M637.800 855.500c2-1.500 4-3.200 6.500-5.500" stroke="#6e6e6e" stroke-width=".9" fill="none"/>
<path d="M1204.400 856h-6a5.600 5.600 0 1 1 6-5.500z" fill="none" stroke="#6e6e6e" stroke-width="1.500"/>
</svg>
<div class="abs" style="left:0;top:861px;width:1294px;height:21px;background:#f2f2f2"></div>
<span class="t" style="letter-spacing:0.06px;left:28px;top:861px;">Build completed successfully in 2 s 698 ms (moments ago)</span>
<span class="t" style="letter-spacing:-0.24px;left:1001px;top:861px;">52:22</span>
<span class="t" style="letter-spacing:-0.80px;left:1044.5px;top:861px;">LF</span>
<span class="t" style="letter-spacing:-0.54px;left:1068.2px;top:861px;">UTF-8</span>
<span class="t" style="letter-spacing:-0.08px;left:1114.2px;top:861px;">4 spaces</span>
<span class="t" style="letter-spacing:0.08px;left:1194px;top:861px;">master</span>
<svg class="abs" style="left:0;top:861px" width="1294" height="20" viewBox="0 861 1294 20">
<path d="M9.800 865.800h8.600v8.600h-8.600z" fill="none" stroke="#6e6e6e" stroke-width="1.200"/><path d="M7.600 867.300v9h9.300" fill="none" stroke="#6e6e6e" stroke-width="1.200"/>
<path d="M1180.500 864.500v12" stroke="#6e6e6e" stroke-width="2.200"/><circle cx="1180.500" cy="866" r="1.900" fill="#6e6e6e"/><circle cx="1180.500" cy="876" r="1.900" fill="#6e6e6e"/><circle cx="1186.700" cy="867.500" r="1.900" fill="#6e6e6e"/><path d="M1186.700 868v2.200c0 1.500-1 2-2.500 2h-3.500" stroke="#6e6e6e" stroke-width="1.500" fill="none"/>
<rect x="1247" y="870" width="8" height="6.500" fill="#6e6e6e"/><path d="M1244.800 869.500v-1.500a2.300 2.300 0 0 1 4.600 0v2.500" stroke="#6e6e6e" stroke-width="1.400" fill="none"/>
<path d="M1268.300 868.700h13.400" stroke="#6e6e6e" stroke-width="1.300"/><path d="M1271.300 868.500v-2.200c0-1.300 1-1.900 1.900-1.900h3.600c.9 0 1.900.6 1.900 1.900v2.200z" fill="#6e6e6e"/><path d="M1272 869.800h6v1.700c0 1.700-1.300 2.700-3 2.700s-3-1-3-2.700z" fill="#f2f2f2" stroke="#6e6e6e" stroke-width="1"/><path d="M1269.300 877c.5-2.200 2.300-2.600 5.700-2.600s5.200.4 5.700 2.600z" fill="#6e6e6e"/>
</svg>
<div class="abs" style="left:0;top:0;width:1294px;height:882px;border:1px solid #707070;border-right:0;pointer-events:none"></div>
<div class="abs" style="left:1293px;top:0;width:1px;height:882px;background:#7a7a7a"></div>
</body></html>
